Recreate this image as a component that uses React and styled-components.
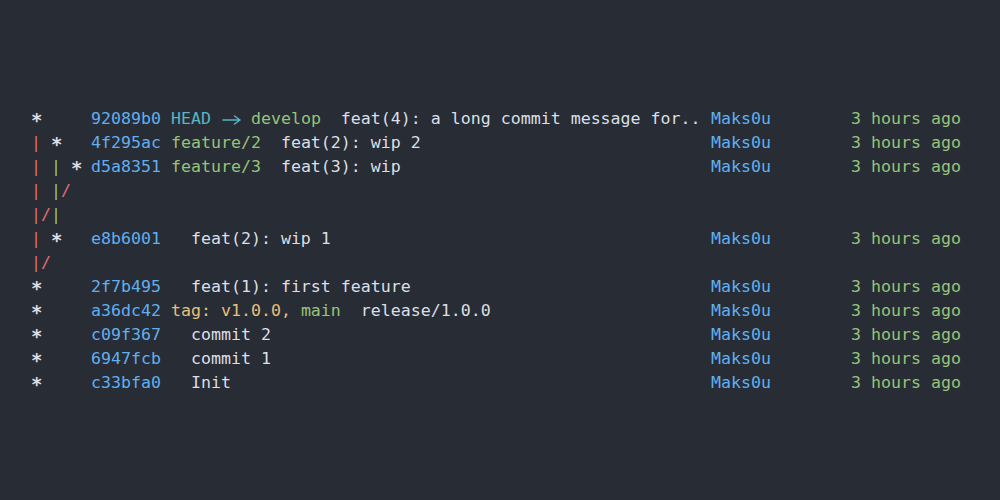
import React from "react";
import styled, { createGlobalStyle } from "styled-components";

const colors = {
  bg: "#282c34",
  text: "#dcdfe4",
  red: "#e06c75",
  green: "#98c379",
  blue: "#61afef",
  cyan: "#56b6c2",
  yellow: "#e5c07b",
};

const GlobalStyle = createGlobalStyle`
  html, body {
    margin: 0;
    padding: 0;
    background: ${colors.bg};
  }
  body {
    font-family: "DejaVu Sans Mono", "Liberation Mono", monospace;
  }
`;

const Screen = styled.main`
  height: 500px;
  box-sizing: border-box;
  display: flex;
  align-items: center;
  padding: 2px 0 0 31px;
  background: ${colors.bg};
  color: ${colors.text};
  font-size: 16.6px;
  line-height: 24px;
`;

const Log = styled.div`
  display: flex;
  flex-direction: column;
`;

const Row = styled.div`
  display: grid;
  grid-template-columns: 60px 80px 540px 140px 110px;
  height: 24px;
  white-space: pre;
`;

const Graph = styled.span`
  display: flex;
  align-items: flex-start;
  height: 24px;
`;

const Cell = styled.span`
  display: inline-block;
  width: 10px;
  text-align: center;
  color: ${(p) => p.$color || colors.text};
  font-size: ${(p) => (p.$star ? "19px" : "inherit")};
  font-weight: ${(p) => (p.$star ? "bold" : "normal")};
  padding-top: ${(p) => (p.$star ? "3px" : "0")};
  line-height: ${(p) => (p.$star ? "21px" : "24px")};
`;

const Hash = styled.span`
  color: ${colors.blue};
`;

const Subject = styled.span`
  overflow: hidden;
`;

const Ref = styled.span`
  color: ${(p) => p.$color};
`;

const Author = styled.span`
  color: ${colors.blue};
`;

const Date = styled.span`
  color: ${colors.green};
`;

const ArrowBox = styled.span`
  display: inline-block;
  width: 20px;
  height: 24px;
  vertical-align: top;
`;

const Arrow = () => (
  <ArrowBox>
    <svg width="20" height="24" viewBox="0 0 20 24">
      <path
        d="M2 13H19M13.5 9L19 13L13.5 17"
        stroke={colors.cyan}
        strokeWidth="1.5"
        fill="none"
        strokeLinecap="round"
        strokeLinejoin="round"
      />
    </svg>
  </ArrowBox>
);

const R = colors.red;
const G = colors.green;

const rows = [
  {
    graph: [["*"]],
    hash: "92089b0",
    refs: (
      <>
        <Ref $color={colors.cyan}>HEAD </Ref>
        <Arrow />
        <Ref $color={colors.green}> develop</Ref>
      </>
    ),
    msg: "feat(4): a long commit message for..",
  },
  {
    graph: [["|", R], [" "], ["*"]],
    hash: "4f295ac",
    refs: <Ref $color={colors.green}>feature/2</Ref>,
    msg: "feat(2): wip 2",
  },
  {
    graph: [["|", R], [" "], ["|", G], [" "], ["*"]],
    hash: "d5a8351",
    refs: <Ref $color={colors.green}>feature/3</Ref>,
    msg: "feat(3): wip",
  },
  { graph: [["|", R], [" "], ["|", G], ["/", R]] },
  { graph: [["|", R], ["/", R], ["|", G]] },
  {
    graph: [["|", R], [" "], ["*"]],
    hash: "e8b6001",
    msg: "feat(2): wip 1",
  },
  { graph: [["|", R], ["/", R]] },
  { graph: [["*"]], hash: "2f7b495", msg: "feat(1): first feature" },
  {
    graph: [["*"]],
    hash: "a36dc42",
    refs: (
      <>
        <Ref $color={colors.yellow}>tag: v1.0.0, </Ref>
        <Ref $color={colors.green}>main</Ref>
      </>
    ),
    msg: "release/1.0.0",
  },
  { graph: [["*"]], hash: "c09f367", msg: "commit 2" },
  { graph: [["*"]], hash: "6947fcb", msg: "commit 1" },
  { graph: [["*"]], hash: "c33bfa0", msg: "Init" },
];

const App = () => {
  return (
    <>
      <GlobalStyle />
      <Screen>
        <Log>
          {rows.map((row, i) => (
            <Row key={i}>
              <Graph>
                {row.graph.map(([ch, color], j) => (
                  <Cell key={j} $color={color} $star={ch === "*"}>
                    {ch}
                  </Cell>
                ))}
              </Graph>
              {row.hash && (
                <>
                  <Hash>{row.hash}</Hash>
                  <Subject>
                    {row.refs}
                    {"  " + row.msg}
                  </Subject>
                  <Author>Maks0u</Author>
                  <Date>3 hours ago</Date>
                </>
              )}
            </Row>
          ))}
        </Log>
      </Screen>
    </>
  );
};

export default App;
